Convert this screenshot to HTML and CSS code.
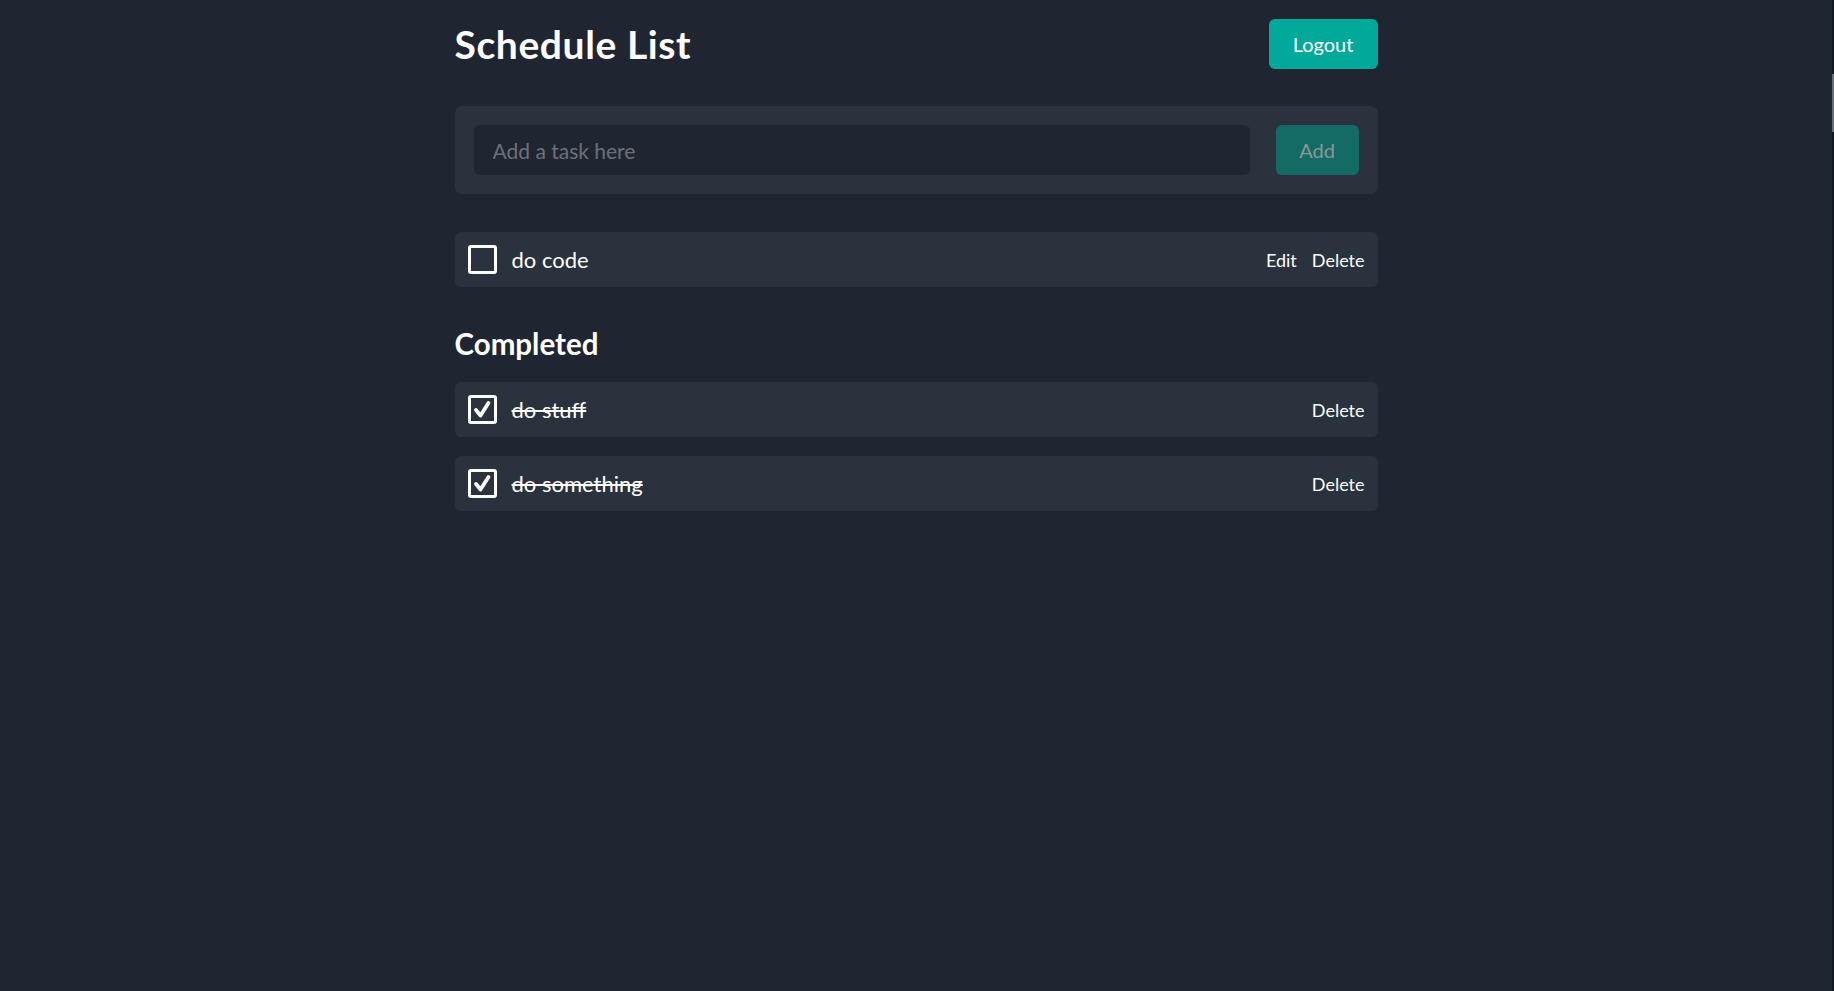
FILE: index.html
```html
<!DOCTYPE html>
<html lang="en">
<head>
<meta charset="utf-8">
<title>Schedule List</title>
<link rel="stylesheet" href="styles.css">
</head>
<body>
<main class="main">
  <div class="page">
    <header class="header">
      <h1 class="title">Schedule List</h1>
      <button class="btn btn-logout">Logout</button>
    </header>

    <form class="add-card">
      <input class="task-input" type="text" placeholder="Add a task here">
      <button class="btn btn-add" type="button">Add</button>
    </form>

    <ul class="task-list">
      <li class="task">
        <span class="check"></span>
        <span class="task-text">do code</span>
        <span class="actions"><button class="link-btn">Edit</button><button class="link-btn">Delete</button></span>
      </li>
    </ul>

    <h2 class="section-title">Completed</h2>
    <ul class="task-list completed">
      <li class="task">
        <span class="check checked"><svg viewBox="0 0 23 23" width="23" height="23"><path d="M5 12 L9.5 17.5 L17.5 5" fill="none" stroke="#fff" stroke-width="3.8" stroke-linecap="round" stroke-linejoin="round"/></svg></span>
        <span class="task-text done">do stuff</span>
        <span class="actions"><button class="link-btn">Delete</button></span>
      </li>
      <li class="task">
        <span class="check checked"><svg viewBox="0 0 23 23" width="23" height="23"><path d="M5 12 L9.5 17.5 L17.5 5" fill="none" stroke="#fff" stroke-width="3.8" stroke-linecap="round" stroke-linejoin="round"/></svg></span>
        <span class="task-text done">do something</span>
        <span class="actions"><button class="link-btn">Delete</button></span>
      </li>
    </ul>
  </div>
</main>
<div class="scrollbar"><div class="scrollbar-thumb"></div></div>
</body>
</html>
```

FILE: styles.css
```css
* { box-sizing: border-box; }

html, body {
  margin: 0;
  padding: 0;
  height: 100%;
  overflow: hidden;
}

body {
  display: flex;
  background: #1f2632;
  color: #ffffff;
  font-family: "Lato", "Open Sans", sans-serif;
}

.main {
  flex: 1;
}

.page {
  width: 923px;
  margin: 0 auto;
  padding-top: 19px;
}

.header {
  display: flex;
  justify-content: space-between;
  align-items: center;
  height: 50px;
}

.title {
  margin: 0;
  font-size: 39px;
  font-weight: 700;
  letter-spacing: 0.6px;
}

.btn {
  border: none;
  border-radius: 6px;
  font-family: inherit;
  font-size: 20px;
  cursor: pointer;
}

.btn-logout {
  width: 109px;
  height: 50px;
  background: #00a99a;
  color: #ffffff;
}

.add-card {
  margin: 37px 0 0;
  display: flex;
  gap: 26px;
  padding: 19px;
  background: #29323d;
  border-radius: 7px;
}

.task-input {
  flex: 1;
  height: 50px;
  border: none;
  border-radius: 6px;
  background: #1f2632;
  color: #ffffff;
  font-family: inherit;
  font-size: 21px;
  padding: 0 19px;
  outline: none;
}

.task-input::placeholder {
  color: #6d7177;
}

.btn-add {
  width: 83px;
  height: 50px;
  background: #146b66;
  color: #8a9899;
}

.task-list {
  list-style: none;
  margin: 38px 0 0;
  padding: 0;
  display: flex;
  flex-direction: column;
  gap: 19px;
}

.task-list.completed {
  margin-top: 0;
}

.task {
  display: flex;
  align-items: center;
  height: 55px;
  padding: 0 13px;
  background: #29323d;
  border-radius: 6px;
}

.check {
  width: 29px;
  height: 29px;
  border: 3px solid #ffffff;
  border-radius: 3px;
  flex: none;
  display: flex;
  align-items: center;
  justify-content: center;
}

.task-text {
  margin-left: 15px;
  font-size: 22px;
  flex: 1;
}

.task-text.done {
  text-decoration: line-through;
}

.actions {
  display: flex;
  gap: 15px;
}

.link-btn {
  background: none;
  border: none;
  padding: 0;
  color: #ffffff;
  font-family: inherit;
  font-size: 18px;
  cursor: pointer;
}

.section-title {
  margin: 39px 0 20px;
  font-size: 29.5px;
  font-weight: 700;
  line-height: 36px;
}

.scrollbar {
  flex: none;
  width: 2px;
  height: 100%;
  background: #15181d;
}

.scrollbar-thumb {
  margin-top: 74px;
  height: 58px;
  background: #6a6d72;
}
```
